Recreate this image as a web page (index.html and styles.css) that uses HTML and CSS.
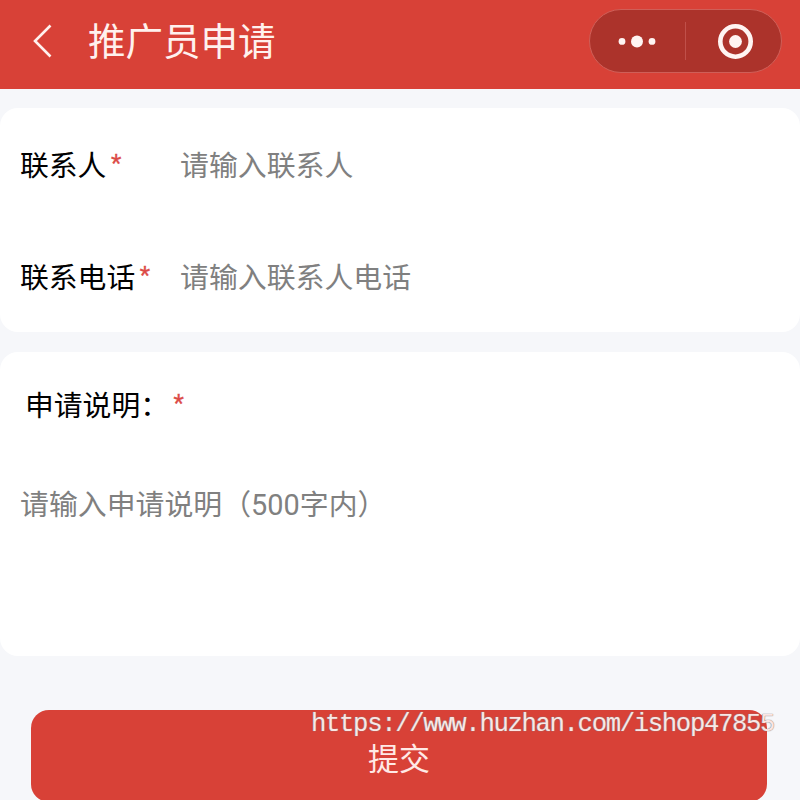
FILE: index.html
```html
<!DOCTYPE html>
<html lang="zh-CN">
<head>
<meta charset="utf-8">
<title>推广员申请</title>
<link rel="stylesheet" href="styles.css">
</head>
<body>
<header class="navbar">
  <svg class="back" width="20" height="36" viewBox="0 0 20 36"><path d="M18.5 2.5 L3 18 L18.5 33.5"/></svg>
  <h1 class="title">推广员申请</h1>
  <div class="capsule">
    <svg class="dots" width="40" height="14" viewBox="0 0 40 14"><circle cx="5" cy="7.4" r="3.4"/><circle cx="20" cy="7.4" r="6"/><circle cx="35" cy="7.4" r="3.4"/></svg>
    <span class="divider"></span>
    <svg class="target" width="38" height="38" viewBox="0 0 38 38"><circle class="ring" cx="19.5" cy="19.5" r="15.2"/><circle class="core" cx="19.5" cy="19.5" r="6.4"/></svg>
  </div>
</header>
<main class="form">
  <section class="card">
    <div class="field"><label class="label">联系人<span class="req">*</span></label><span class="hint">请输入联系人</span></div>
    <div class="field"><label class="label">联系电话<span class="req">*</span></label><span class="hint">请输入联系人电话</span></div>
  </section>
  <section class="card notes">
    <div class="label notes-label">申请说明：<span class="req">*</span></div>
    <div class="hint">请输入申请说明（500字内）</div>
  </section>
  <button class="submit">提交</button>
</main>
<div class="watermark">https://www.huzhan.com/ishop47855</div>
</body>
</html>
```
FILE: styles.css
```css
* { box-sizing: border-box; }
body { margin: 0; width: 800px; height: 800px; overflow: hidden; position: relative; background: #f6f7fa; font-family: Roboto, "Noto Sans CJK SC", sans-serif; color: #000; }
.navbar { height: 88.5px; background: #d84137; display: flex; align-items: center; padding: 0 18px 6px 32px; }
.back { fill: none; stroke: #fff1ee; stroke-width: 2.6; }
.title { margin: 0 auto 0 36px; padding-top: 2px; font-size: 37.5px; line-height: 50px; font-weight: 400; color: #fff1ee; }
.capsule { width: 193px; height: 64px; border: 1px solid #cf5f58; border-radius: 32px; background: #ac332b; display: flex; align-items: center; padding-left: 27px; }
.dots { fill: #fff4f2; }
.divider { width: 1px; height: 38px; margin: 0 30px 0 28px; background: #c0504a; }
.ring { fill: none; stroke: #fff4f2; stroke-width: 4.6; }
.core { fill: #fff4f2; }
.form { display: flex; flex-direction: column; gap: 20px; padding-top: 19.5px; }
.card { background: #fff; border-radius: 18px; }
.field { height: 112px; display: flex; align-items: center; padding: 4px 0 0 20px; }
.label { width: 160px; font-size: 28.8px; line-height: 42px; white-space: nowrap; }
.req { display: inline-block; color: #dc4b47; font-size: 24px; line-height: 20px; margin-left: 4.5px; vertical-align: 5.5px; -webkit-text-stroke: 0.3px #dc4b47; }
.hint { font-size: 28.9px; line-height: 42px; color: #808080; white-space: nowrap; }
.notes { height: 304px; padding: 33px 20px; }
.notes-label { padding-left: 5px; margin-bottom: 57px; }
.submit { height: 92px; margin: 34px 33px 0 31px; border: 0; border-radius: 18px; background: #d84137; color: #ffe9e6; font: inherit; font-size: 31px; line-height: 40px; padding: 8px 0 0; }
.watermark { position: absolute; left: 311px; top: 710px; font: 25.5px/30px "Liberation Mono", monospace; letter-spacing: -1.27px; color: #fbe6e4; text-shadow: 0 0 1px #777, 0 0 1px #999; white-space: nowrap; }
```
